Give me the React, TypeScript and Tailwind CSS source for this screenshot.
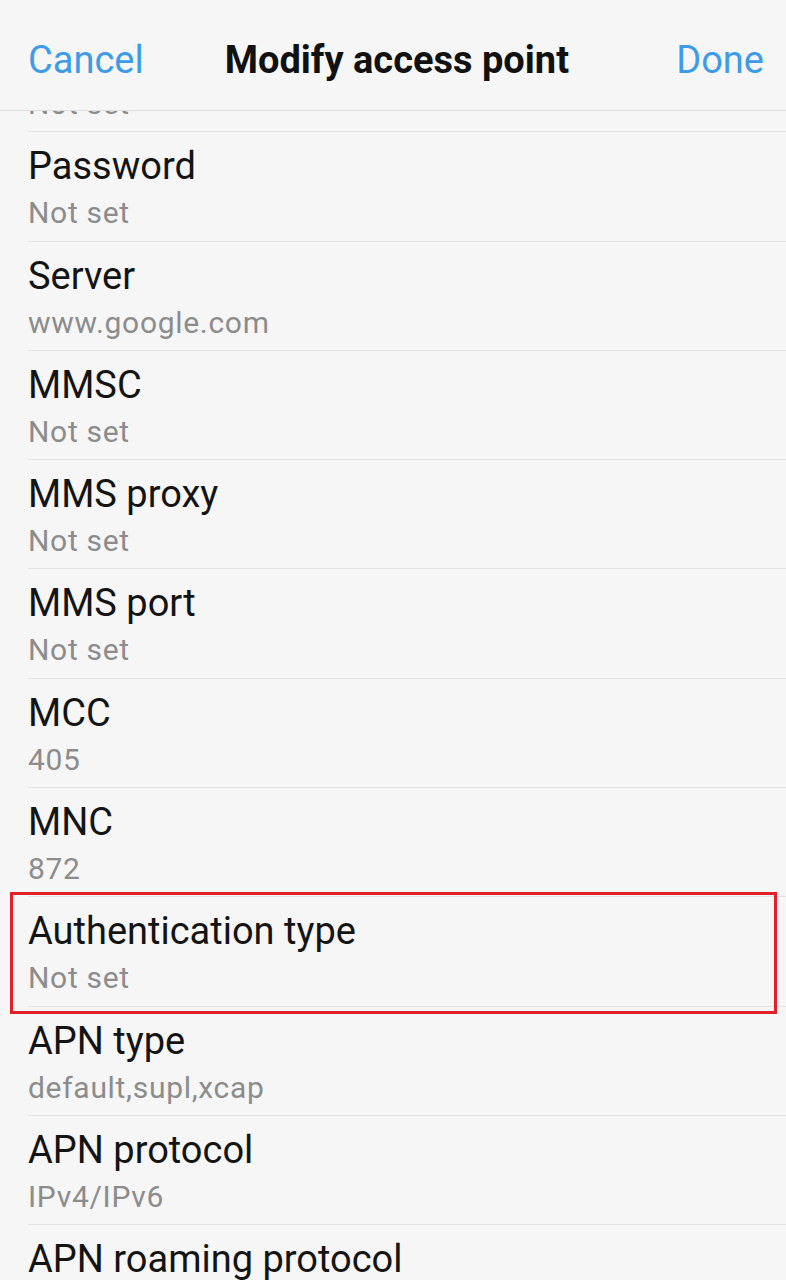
import React from "react";

interface Field {
  label: string;
  value: string;
  highlight?: boolean;
}

const FIELDS: Field[] = [
  { label: "Username", value: "Not set" },
  { label: "Password", value: "Not set" },
  { label: "Server", value: "www.google.com" },
  { label: "MMSC", value: "Not set" },
  { label: "MMS proxy", value: "Not set" },
  { label: "MMS port", value: "Not set" },
  { label: "MCC", value: "405" },
  { label: "MNC", value: "872" },
  { label: "Authentication type", value: "Not set", highlight: true },
  { label: "APN type", value: "default,supl,xcap" },
  { label: "APN protocol", value: "IPv4/IPv6" },
  { label: "APN roaming protocol", value: "IPv4/IPv6" },
];

const FieldRow: React.FC<{ field: Field }> = ({ field }) => (
  <div className="relative h-[109.3px] pl-[28px]">
    <div className="h-full border-b border-[#e2e2e2] pt-[12px]">
      <div className="text-[38px] leading-[44px] text-[#141414] whitespace-nowrap">{field.label}</div>
      <div className="mt-[8px] text-[30px] leading-[34px] tracking-[0.7px] text-[#8c8c8c] whitespace-nowrap">
        {field.value}
      </div>
    </div>
    {field.highlight && (
      <div className="absolute left-[10px] right-[9px] -top-[5px] -bottom-[7px] border-[3px] border-[#e3202a] pointer-events-none" />
    )}
  </div>
);

export default function App() {
  return (
    <div
      className="w-[786px] h-[1280px] overflow-hidden bg-[#f6f6f6] flex flex-col"
      style={{ fontFamily: "Roboto, 'Noto Sans', sans-serif" }}
    >
      <header className="h-[111px] shrink-0 flex items-center pl-[28px] pr-[22px] pt-[9px] border-b border-[#dedede] bg-[#f6f6f6] relative z-10">
        <button className="text-[38px] leading-[44px] text-[#3d9be9]">Cancel</button>
        <h1 className="ml-[81px] text-[38px] leading-[44px] font-bold text-[#111] whitespace-nowrap">
          Modify access point
        </h1>
        <button className="ml-auto text-[38px] leading-[44px] text-[#3d9be9]">Done</button>
      </header>
      <div className="flex-1 overflow-hidden">
        <div className="-mt-[88px]">
          {FIELDS.map((f) => (
            <FieldRow key={f.label} field={f} />
          ))}
        </div>
      </div>
    </div>
  );
}
